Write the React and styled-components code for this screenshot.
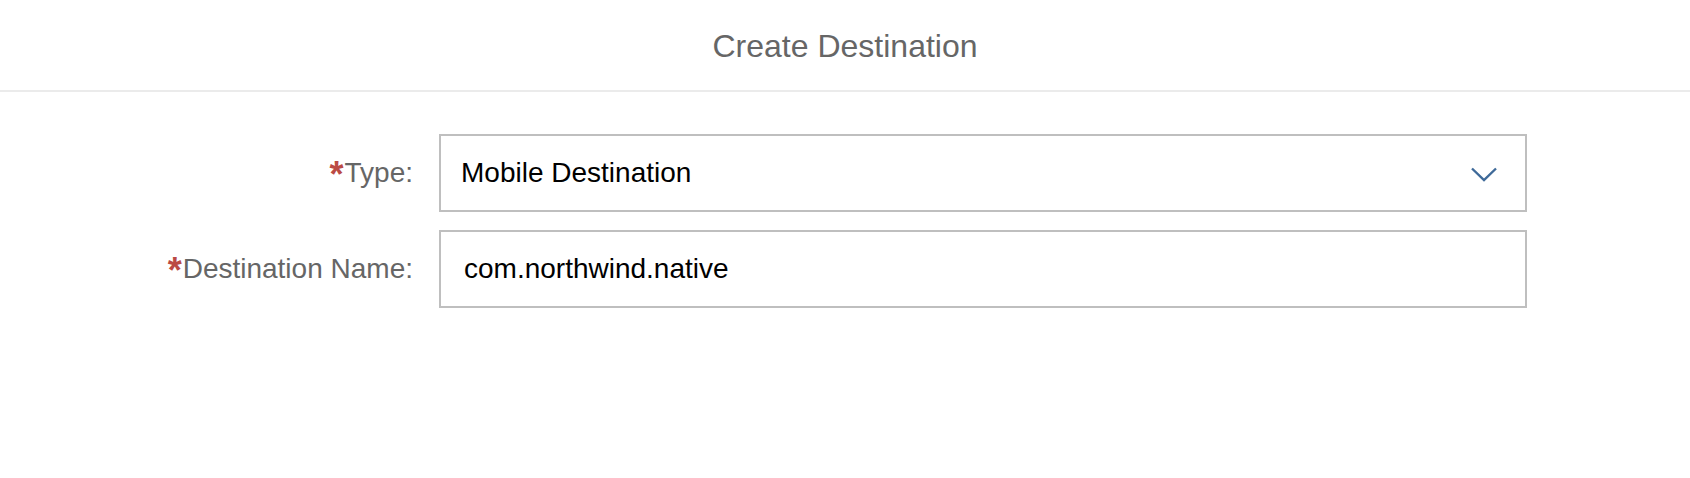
import styled, { createGlobalStyle } from "styled-components";

const GlobalStyle = createGlobalStyle`
  body {
    margin: 0;
    background: #ffffff;
    font-family: "Liberation Sans", Arial, sans-serif;
  }
`;

const Page = styled.div`
  width: 1690px;
  height: 478px;
  background: #ffffff;
`;

const Header = styled.header`
  height: 90px;
  display: flex;
  align-items: center;
  justify-content: center;
  border-bottom: 2px solid #ebebeb;
  box-sizing: content-box;
`;

const Title = styled.h1`
  margin: 0;
  padding-top: 3px;
  font-size: 32px;
  font-weight: normal;
  color: #666666;
`;

const Form = styled.div`
  display: grid;
  grid-template-columns: 413px 1088px;
  column-gap: 26px;
  row-gap: 18px;
  padding-top: 42px;
`;

const Label = styled.label`
  display: flex;
  align-items: center;
  justify-content: flex-end;
  font-size: 28px;
  color: #666666;
  white-space: nowrap;
`;

const Required = styled.span`
  font-size: 36px;
  font-weight: bold;
  color: #bb4a44;
  line-height: 1;
  margin-right: 1px;
  position: relative;
  top: 2px;
`;

const Field = styled.div`
  height: 78px;
  box-sizing: border-box;
  border: 2px solid #bfbfbf;
  background: #ffffff;
  display: flex;
  align-items: center;
  padding-left: ${(props) => props.indent || "20px"};
  font-size: 28px;
  color: #000000;
`;

const Value = styled.span`
  flex: 1;
`;

const Chevron = styled.svg`
  width: 26px;
  height: 15px;
  margin-right: 28px;
  margin-top: 2px;
`;

export default function App() {
  return (
    <Page>
      <GlobalStyle />
      <Header>
        <Title>Create Destination</Title>
      </Header>
      <Form>
        <Label>
          <Required>*</Required>Type:
        </Label>
        <Field>
          <Value>Mobile Destination</Value>
          <Chevron viewBox="0 0 26 15">
            <polyline
              points="1,1.5 13,13 25,1.5"
              fill="none"
              stroke="#3f6a99"
              strokeWidth="2.4"
            />
          </Chevron>
        </Field>
        <Label>
          <Required>*</Required>Destination Name:
        </Label>
        <Field indent="23px">
          <Value>com.northwind.native</Value>
        </Field>
      </Form>
    </Page>
  );
}
